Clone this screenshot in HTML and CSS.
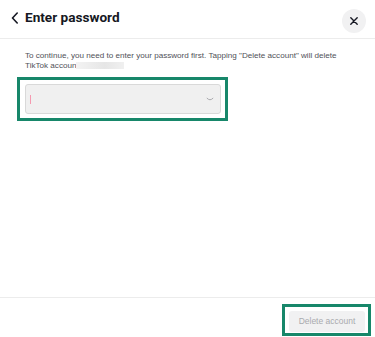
FILE: index.html
```html
<!DOCTYPE html>
<html>
<head>
<meta charset="utf-8">
<link rel="stylesheet" href="styles.css">
</head>
<body>
<div class="page">
  <header class="header">
    <div class="title-wrap">
      <svg class="back" width="8" height="12" viewBox="0 0 8 12"><path d="M6.2 1 L1.5 6 L6.2 11" fill="none" stroke="#161823" stroke-width="1.6" stroke-linecap="round" stroke-linejoin="round"/></svg>
      <h1 class="title">Enter password</h1>
    </div>
    <button class="close" aria-label="Close">
      <svg width="10" height="10" viewBox="0 0 10 10"><path d="M1.8 1.8 L8.2 8.2 M8.2 1.8 L1.8 8.2" stroke="#161823" stroke-width="1.4" stroke-linecap="round"/></svg>
    </button>
  </header>
  <main class="content">
    <p class="desc">To continue, you need to enter your password first. Tapping "Delete account" will delete TikTok accoun<span class="redact"></span></p>
    <div class="highlight field-hl">
      <div class="input">
        <span class="caret"></span>
        <svg class="eye" width="8" height="5" viewBox="0 0 8 5"><path d="M0.8 1 Q4 4.5 7.2 1" fill="none" stroke="#a9a9ad" stroke-width="1"/></svg>
      </div>
    </div>
  </main>
  <footer class="footer">
    <div class="highlight btn-hl">
      <button class="delete">Delete account</button>
    </div>
  </footer>
</div>
</body>
</html>
```
FILE: styles.css
```css
html, body {
  margin: 0;
  padding: 0;
  background: #fff;
}
.page {
  width: 375px;
  height: 337px;
  display: flex;
  flex-direction: column;
  font-family: "Liberation Sans", Arial, sans-serif;
}
.header {
  height: 38px;
  border-bottom: 1px solid #ececec;
  display: flex;
  align-items: flex-start;
  justify-content: space-between;
  padding: 0 9px 0 11px;
  flex-shrink: 0;
}
.title-wrap {
  display: flex;
  align-items: center;
  gap: 6px;
  height: 34px;
}
.back {
  display: block;
  margin-top: 1px;
}
.title {
  margin: 0;
  font-family: Roboto, "Liberation Sans", sans-serif;
  font-weight: 700;
  font-size: 13.6px;
  color: #161823;
  line-height: 16px;
}
.close {
  width: 24px;
  height: 24px;
  margin-top: 9px;
  border: 0;
  padding: 0;
  border-radius: 50%;
  background: #f1f1f2;
  display: flex;
  align-items: center;
  justify-content: center;
}
.content {
  flex: 1;
  padding: 12px 0 0 17px;
}
.desc {
  margin: 0 0 6px 8px;
  font-size: 8.1px;
  line-height: 10px;
  color: #505158;
  width: 330px;
}
.redact {
  display: inline-block;
  width: 48px;
  height: 7px;
  background: linear-gradient(90deg, #f3f3f3, #e6e6e6 60%, #f0f0f0);
  vertical-align: -1px;
}
.highlight {
  border: 3px solid #17876a;
  box-sizing: border-box;
}
.field-hl {
  width: 211px;
  height: 44px;
  padding: 4px 4px 4px 5px;
}
.input {
  height: 30px;
  box-sizing: border-box;
  background: #f0f0f0;
  border: 1px solid #d9d9d9;
  border-radius: 3px;
  display: flex;
  align-items: center;
  justify-content: space-between;
  padding: 0 6px 0 4px;
}
.caret {
  width: 1px;
  height: 9px;
  background: #f59ab0;
}
.eye {
  display: block;
}
.footer {
  height: 40px;
  border-top: 1px solid #ececec;
  display: flex;
  justify-content: flex-end;
  padding: 6px 4px 0 0;
  box-sizing: border-box;
  flex-shrink: 0;
}
.btn-hl {
  width: 89px;
  height: 32px;
  padding: 3px 3px 2px 4px;
}
.delete {
  width: 100%;
  height: 21px;
  border: 0;
  border-radius: 3px;
  background: #f1f1f2;
  color: #a9aaae;
  font-family: "Liberation Sans", Arial, sans-serif;
  font-size: 8.5px;
  padding: 0;
}
```
